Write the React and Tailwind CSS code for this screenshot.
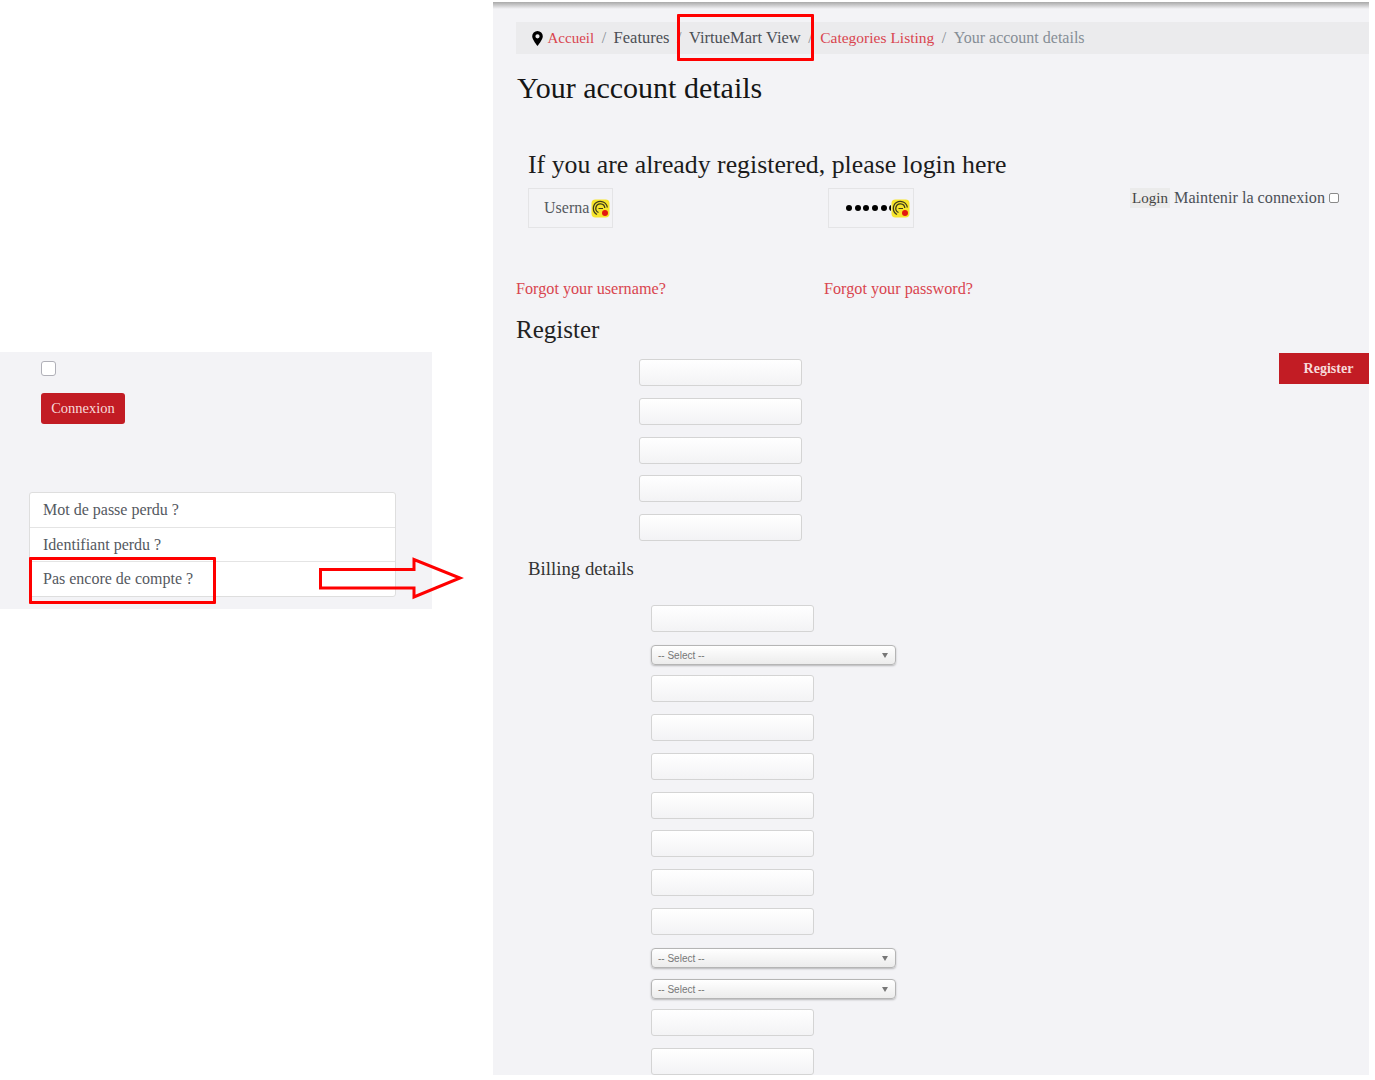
// App.jsx
import React from 'react';

const serif = "font-['Liberation_Serif',serif]";

function TextBox({ className = '' }) {
  return (
    <div className={`h-[27px] w-[163px] shrink-0 rounded-[3px] border border-[#d4d4d4] bg-gradient-to-b from-white to-[#f3f3f5] ${className}`} />
  );
}

function SelectBox({ className = '' }) {
  return (
    <div className={`flex h-[20px] w-[245px] items-center justify-between rounded-[4px] border border-[#b5b5b5] bg-gradient-to-b from-white to-[#ececec] pl-[6px] pr-[7px] shadow-[0_1px_2px_rgba(0,0,0,0.25)] ${className}`}>
      <span className="font-['Liberation_Sans',sans-serif] text-[10px] text-[#777]">-- Select --</span>
      <span className="h-0 w-0 border-x-[3px] border-t-[5px] border-x-transparent border-t-[#777]" />
    </div>
  );
}

function KeyIcon() {
  return (
    <svg width="19" height="19" viewBox="0 0 19 19" className="shrink-0">
      <rect x="0.5" y="0.5" width="18" height="18" rx="4" fill="#f7e52b" />
      <path d="M6 15.500 A7 7 0 1 1 16.300 8.500" fill="none" stroke="#3d3a1c" strokeWidth="1.300" />
      <path d="M7.500 13.500 A4.500 4.500 0 1 1 13.800 9" fill="none" stroke="#3d3a1c" strokeWidth="1.300" />
      <path d="M7.500 9.500H12" stroke="#3d3a1c" strokeWidth="1" />
      <circle cx="14" cy="14" r="3" fill="#e3170f" />
    </svg>
  );
}

function PinIcon() {
  return (
    <svg width="11" height="15" viewBox="0 0 11 15" className="mr-[-3px] shrink-0">
      <path fillRule="evenodd" d="M5.500 0A5.300 5.300 0 0 0 .2 5.300C.2 8.800 5.500 15 5.500 15s5.300-6.200 5.300-9.700A5.300 5.300 0 0 0 5.500 0zm0 7.400a2.100 2.100 0 1 1 0-4.200 2.100 2.100 0 0 1 0 4.200z" fill="#000" />
    </svg>
  );
}

function Sep() {
  return <span className="text-[16px] text-[#868e96]">/</span>;
}

function LeftPanel() {
  return (
    <div className="w-[432px] shrink-0 pt-[352px]">
      <div className="flex h-[257px] flex-col bg-[#f3f3f6] pl-[29px] pr-[36px] pt-[9px]">
        <div className="ml-[12px] h-[15px] w-[15px] rounded-[3px] border border-[#b0b0b8] bg-white" />
        <button className="ml-[12px] mt-[17px] h-[31px] w-[84px] rounded-[3px] bg-[#c21c24] text-[14.500px] text-[#f7dada]">Connexion</button>
        <div className="mt-[68px] rounded-[3px] border border-[#dedede] bg-white text-[16px] text-[#55595f]">
          <div className="flex h-[35px] items-center border-b border-[#e4e4e4] pl-[13px]">Mot de passe perdu ?</div>
          <div className="flex h-[34px] items-center border-b border-[#e4e4e4] pl-[13px]">Identifiant perdu ?</div>
          <div className="flex h-[34px] items-center pl-[13px]">Pas encore de compte ?</div>
        </div>
      </div>
    </div>
  );
}

function LoginRow() {
  return (
    <div className="ml-[35px] mt-[8px] flex h-[40px] items-start">
      <div className="flex h-[40px] w-[85px] items-center overflow-hidden border border-[#e4e4e6] pl-[15px] text-[16px] text-[#55595f]">
        <span className="w-[47px] overflow-hidden">Userna</span>
        <KeyIcon />
      </div>
      <div className="ml-[215px] flex h-[40px] w-[86px] items-center overflow-hidden border border-[#e4e4e6] pl-[17px]">
        <div className="flex w-[45px] gap-[2.700px] overflow-hidden">
          {[0, 1, 2, 3, 4, 5].map((i) => (
            <span key={i} className="h-[6px] w-[6px] shrink-0 rounded-full bg-black" />
          ))}
        </div>
        <KeyIcon />
      </div>
      <div className="ml-[216px] flex h-[20px] w-[40px] items-center justify-center bg-[#ebebeb] text-[15px] text-[#444]">Login</div>
      <span className="ml-[4px] text-[16.200px] leading-[20px] text-[#4b5057]">Maintenir la connexion</span>
      <div className="ml-[4px] mt-[5px] h-[10px] w-[10px] rounded-[2px] border border-[#8a8a8a] bg-white" />
    </div>
  );
}

function RightPanel() {
  return (
    <div className="relative ml-[61px] mt-[2px] h-[1073px] w-[876px] overflow-hidden bg-[#f3f3f6]">
      <div className="h-[7px] bg-gradient-to-b from-[#a9a9a9] to-[#f3f3f6]" />
      <div className="ml-[23px] mt-[13px] flex h-[32px] items-center gap-[7.500px] bg-[#ebebed] pl-[16px]">
        <PinIcon />
        <span className="text-[15px] text-[#d9454f]">Accueil</span>
        <Sep />
        <span className="text-[16.500px] text-[#4b4f55]">Features</span>
        <Sep />
        <span className="text-[16.500px] text-[#4b4f55]">VirtueMart View</span>
        <Sep />
        <span className="text-[15.500px] text-[#d9454f]">Categories Listing</span>
        <Sep />
        <span className="text-[16px] text-[#868e96]">Your account details</span>
      </div>
      <h1 className="ml-[24px] mt-[16px] text-[30px] leading-[36px] text-[#151515]">Your account details</h1>
      <h2 className="ml-[35px] mt-[44px] text-[25.800px] leading-[30px] text-[#1c1c1c]">If you are already registered, please login here</h2>
      <LoginRow />
      <div className="ml-[23px] mt-[51px] flex text-[16.200px] leading-[20px] text-[#d9454f]">
        <span className="w-[308px]">Forgot your username?</span>
        <span>Forgot your password?</span>
      </div>
      <h2 className="ml-[23px] mt-[16px] text-[25px] leading-[30px] text-[#222]">Register</h2>
      <div className="mt-[8px] flex items-start justify-between">
        <div className="ml-[146px] mt-[6px] flex flex-col">
          <TextBox />
          <TextBox className="mt-[12px]" />
          <TextBox className="mt-[12px]" />
          <TextBox className="mt-[11px]" />
          <TextBox className="mt-[12px]" />
        </div>
        <button className="h-[31px] w-[90px] bg-[#c21c24] pl-[9px] text-[14px] font-bold text-[#f7dada]">Register</button>
      </div>
      <h3 className="ml-[35px] mt-[16px] text-[18.800px] leading-[24px] text-[#333]">Billing details</h3>
      <div className="ml-[158px] mt-[24px] flex flex-col">
        <TextBox />
        <SelectBox className="mt-[13px]" />
        <TextBox className="mt-[10px]" />
        <TextBox className="mt-[12px]" />
        <TextBox className="mt-[12px]" />
        <TextBox className="mt-[12px]" />
        <TextBox className="mt-[11px]" />
        <TextBox className="mt-[12px]" />
        <TextBox className="mt-[12px]" />
        <SelectBox className="mt-[13px]" />
        <SelectBox className="mt-[11px]" />
        <TextBox className="mt-[10px]" />
        <TextBox className="mt-[12px]" />
      </div>
    </div>
  );
}

export default function App() {
  return (
    <div className={`relative flex h-[1080px] w-[1375px] overflow-hidden bg-white ${serif}`}>
      <LeftPanel />
      <RightPanel />
      {/* annotations drawn over the screenshots */}
      <div className="absolute left-[29px] top-[557px] h-[47px] w-[187px] rounded-[1px] border-[3px] border-[#ff0000]" />
      <div className="absolute left-[677px] top-[14px] h-[47px] w-[137px] rounded-[1px] border-[3px] border-[#ff0000]" />
      <svg width="150" height="44" viewBox="0 0 150 44" className="absolute left-[318px] top-[556px]">
        <path d="M2.500 13.500H96V3.500L142 22 96 41V32H2.500Z" fill="none" stroke="#ff0000" strokeWidth="3" />
      </svg>
    </div>
  );
}
